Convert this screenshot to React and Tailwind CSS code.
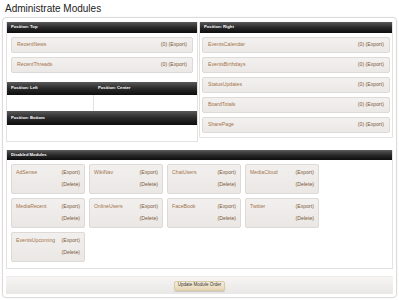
import React from 'react';

const topModules = ['RecentNews', 'RecentThreads'];
const rightModules = ['EventsCalendar', 'EventsBirthdays', 'StatusUpdates', 'BoardTotals', 'SharePage'];
const disabledModules = [
  'AdSense', 'WikiNav', 'ChatUsers', 'MediaCloud',
  'MediaRecent', 'OnlineUsers', 'FaceBook', 'Twitter',
  'EventsUpcoming',
];

const Header = ({ children, className = '' }) => (
  <div
    className={`bg-gradient-to-b from-[#5a5a5a] via-[#2a2a2a] to-[#0e0e0e] text-white font-bold text-[4.2px] px-[4px] flex items-center ${className}`}
  >
    {children}
  </div>
);

const ModuleRow = ({ name }) => (
  <div className="h-[16px] flex items-center justify-between px-[5px] bg-gradient-to-b from-[#f3f1ef] to-[#ebe8e6] border border-[#dcd9d6] rounded-[2px] text-[5.2px]">
    <span className="text-[#a4744a]">{name}</span>
    <span className="text-[#7c5a3a]">(0) (Export)</span>
  </div>
);

const DisabledCard = ({ name }) => (
  <div className="w-[74px] h-[30px] flex flex-col justify-between px-[4px] py-[4px] bg-gradient-to-b from-[#f2f0ee] to-[#eae7e5] border border-[#dcd9d6] rounded-[2px] text-[5.2px]">
    <div className="flex justify-between">
      <span className="text-[#a4744a]">{name}</span>
      <span className="text-[#7c5a3a]">(Export)</span>
    </div>
    <div className="flex justify-end">
      <span className="text-[#7c5a3a]">(Delete)</span>
    </div>
  </div>
);

export default function App() {
  return (
    <div className="w-[399px] h-[300px] bg-white overflow-hidden" style={{ fontFamily: '"Liberation Sans", Arial, sans-serif' }}>
      <h1 className="pl-[5px] pt-[2px] text-[10px] leading-[13px] text-[#222]">Administrate Modules</h1>

      <div className="mx-[2px] mt-[2px] h-[281px] border border-[#dddbd9] rounded-[4px] shadow-[0_0_2px_rgba(0,0,0,0.08)] px-[3px] pt-[4px]">
        {/* enabled positions */}
        <div className="flex gap-[1px]">
          <div className="w-[192px] border border-[#e4e2e0] border-t-0">
            <Header className="h-[11px]">Position: Top</Header>
            <div className="flex flex-col gap-[4px] px-[4px] py-[4px]">
              {topModules.map((m) => (
                <ModuleRow key={m} name={m} />
              ))}
            </div>
            <div className="mt-[5px]">
              <div className="flex">
                <Header className="h-[13px] w-[87px]">Position: Left</Header>
                <Header className="h-[13px] flex-1">Position: Center</Header>
              </div>
              <div className="flex h-[16px]">
                <div className="w-[87px] border-r border-[#e4e2e0]" />
                <div className="flex-1" />
              </div>
              <Header className="h-[14px]">Position: Bottom</Header>
              <div className="h-[16px]" />
            </div>
          </div>

          <div className="flex-1 self-start border border-[#e4e2e0] border-t-0 rounded-b-[2px]">
            <Header className="h-[11px]">Position: Right</Header>
            <div className="flex flex-col gap-[4px] px-[2px] py-[4px]">
              {rightModules.map((m) => (
                <ModuleRow key={m} name={m} />
              ))}
            </div>
          </div>
        </div>

        {/* disabled modules */}
        <div className="mt-[8px] border border-[#e4e2e0] border-t-0 h-[119px]">
          <Header className="h-[10px]">Disabled Modules</Header>
          <div className="flex flex-wrap gap-[4px] px-[4px] pt-[4px] w-[320px]">
            {disabledModules.map((m) => (
              <DisabledCard key={m} name={m} />
            ))}
          </div>
        </div>

        {/* footer */}
        <div className="mt-[7px] h-[18px] flex items-center justify-center bg-gradient-to-b from-[#f6f5f4] to-[#e9e7e5] border-t border-[#eeecea]">
          <button className="h-[10px] px-[3px] rounded-[2px] bg-gradient-to-b from-[#f6eedd] to-[#e6d6b4] border border-[#d9cba8] text-[4.5px] text-[#333] shadow-[0_1px_1px_rgba(0,0,0,0.15)]">
            Update Module Order
          </button>
        </div>
      </div>
    </div>
  );
}
